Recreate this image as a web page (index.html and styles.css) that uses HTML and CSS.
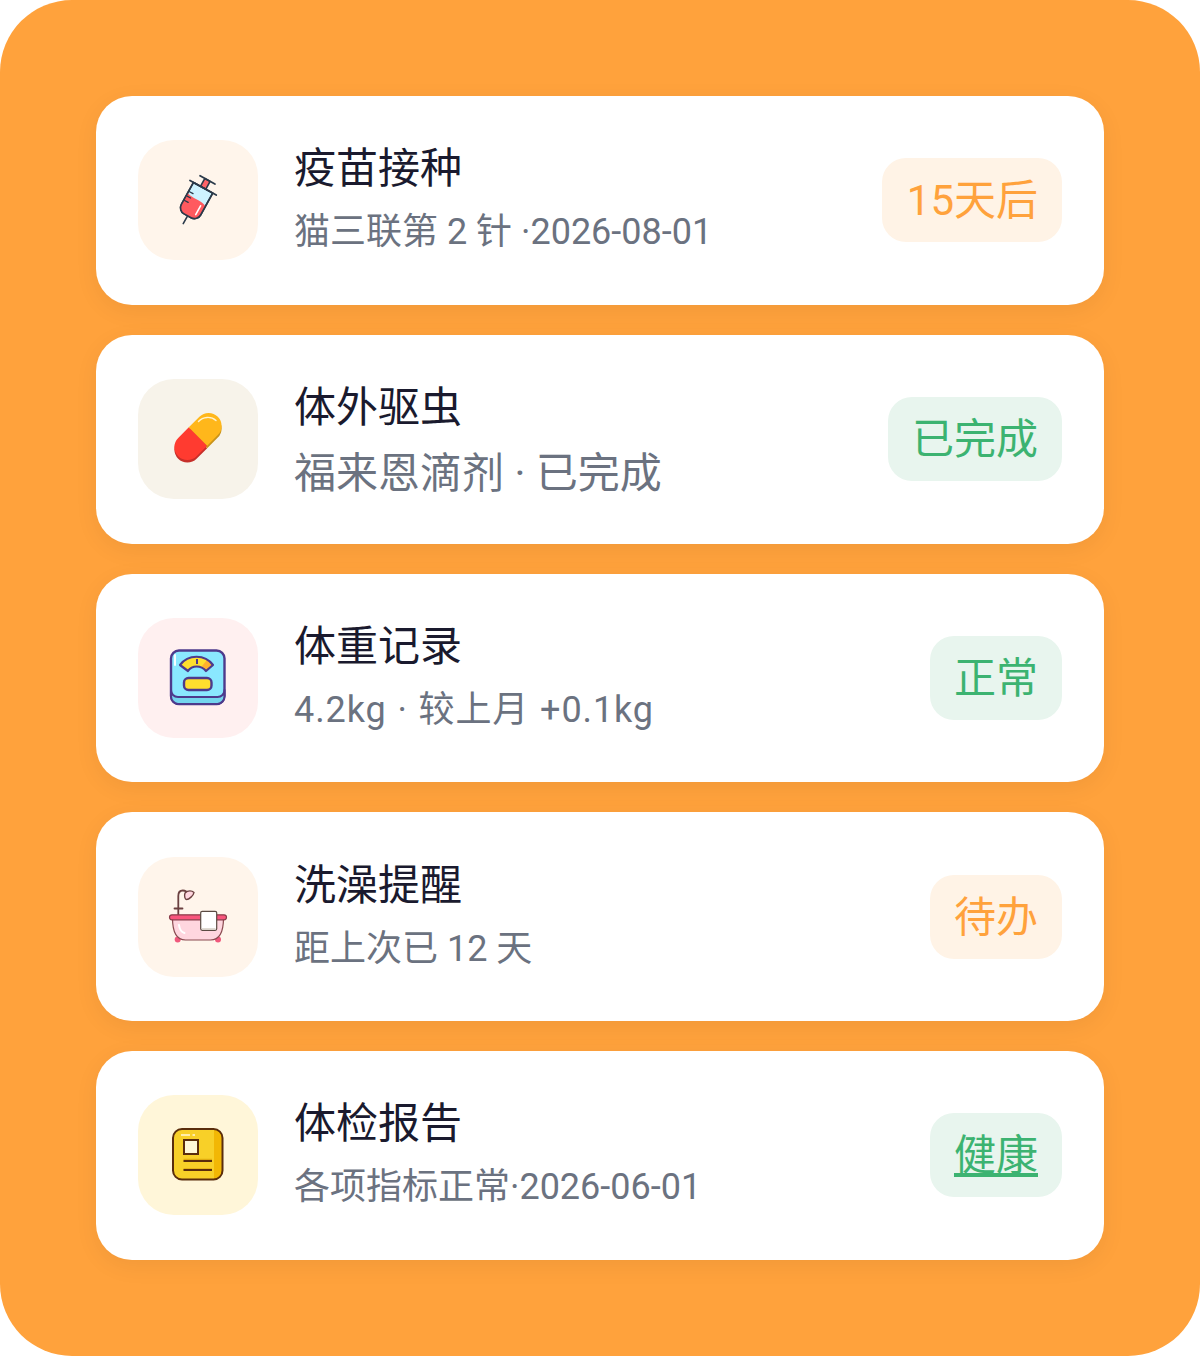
FILE: index.html
```html
<!DOCTYPE html>
<html lang="zh">

<head>
    <meta charset="UTF-8" />
    <meta name="viewport" content="width=device-width, initial-scale=1.0" />
    <title>宠物健康</title>
    <link rel="stylesheet" href="styles.css">
</head>

<body>
    <div class="frame">
        <div class="card">
            <div class="icon icon-cream">
                <svg viewBox="0 0 120 120" width="120" height="120">
                    <g transform="translate(59.3 58.300) rotate(29) translate(-60 -60)" stroke="#2b3a4a" stroke-width="1.600" stroke-linecap="round" stroke-linejoin="round">
                        <line x1="60" y1="80" x2="60" y2="89" />
                        <rect x="57" y="39" width="6" height="9" fill="#ff6468" />
                        <line x1="51.500" y1="39" x2="68.500" y2="39" stroke-width="1.800" />
                        <path d="M49 48V73a7 7 0 0 0 7 7h8a7 7 0 0 0 7-7V48z" fill="#cdf3ff" />
                        <path d="M49 60C56 63 63 59 71 63V73a7 7 0 0 1-7 7h-8a7 7 0 0 1-7-7z" fill="#ff5a5f" stroke="none" />
                        <path d="M49 48V73a7 7 0 0 0 7 7h8a7 7 0 0 0 7-7V48z" fill="none" />
                        <line x1="45" y1="48" x2="75" y2="48" stroke-width="1.800" />
                        <path d="M50 58h4M50 63h4M50 68h4" stroke-width="1.300" />
                        <line x1="66.500" y1="65" x2="66.500" y2="75" stroke="#ffffff" stroke-width="1.600" />
                    </g>
                </svg>
            </div>
            <div class="info">
                <div class="name">疫苗接种</div>
                <div class="desc">猫三联第 2 针 ·2026-08-01</div>
            </div>
            <span class="badge badge-orange badge-wide">15天后</span>
        </div>

        <div class="card">
            <div class="icon icon-beige">
                <svg viewBox="0 0 120 120" width="120" height="120">
                    <g transform="translate(60 60) rotate(-45)">
                        <path d="M0 -13H-15a13 13 0 0 0 0 26H0z" fill="#c62f2a" />
                        <path d="M0 -13H15a13 13 0 0 1 0 26H0z" fill="#c9931a" />
                    </g>
                    <g transform="translate(60 57.500) rotate(-45)">
                        <path d="M0 -13H-15a13 13 0 0 0 0 26H0z" fill="#ff3b30" />
                        <path d="M0 -13H15a13 13 0 0 1 0 26H0z" fill="#ffb71b" />
                    </g>
                    <path d="M60.500 42.500C65 37.500 73 37 78 41.500" fill="none" stroke="#fff3d0" stroke-width="1.400" stroke-linecap="round" />
                </svg>
            </div>
            <div class="info">
                <div class="name">体外驱虫</div>
                <div class="desc desc-big">福来恩滴剂 · 已完成</div>
            </div>
            <span class="badge badge-green">已完成</span>
        </div>

        <div class="card">
            <div class="icon icon-pink">
                <svg viewBox="0 0 120 120" width="120" height="120">
                    <rect x="33" y="32.500" width="53.500" height="53.500" rx="8" fill="#8ae8ff" stroke="#4d3a8c" stroke-width="2.400" />
                    <path d="M33 72c0 4 3 7 7 7h39.500c4 0 7-3 7-7v6c0 4-3 8-7 8H40c-4 0-7-4-7-8z" fill="#74d6ee" stroke="#4d3a8c" stroke-width="2" stroke-linejoin="round" />
                    <line x1="37" y1="37" x2="37" y2="47" stroke="#ffffff" stroke-width="1.800" stroke-linecap="round" />
                    <path d="M42 47C50 36 67 36 75 47L68 53C63 47 54 47 50 53z" fill="#ffdf2e" />
                    <path d="M69 42L74.500 47 68 53 64 48z" fill="#ffb02e" />
                    <path d="M42 47C50 36 67 36 75 47L68 53C63 47 54 47 50 53z" fill="none" stroke="#4d3a8c" stroke-width="2.200" stroke-linejoin="round" />
                    <line x1="59" y1="41" x2="59" y2="46" stroke="#4d3a8c" stroke-width="2" />
                    <rect x="46" y="60" width="27.500" height="12" rx="4.500" fill="#ffdf2e" stroke="#4d3a8c" stroke-width="2.400" />
                </svg>
            </div>
            <div class="info">
                <div class="name">体重记录</div>
                <div class="desc desc-spaced">4.2kg · 较上月 +0.1kg</div>
            </div>
            <span class="badge badge-green">正常</span>
        </div>

        <div class="card">
            <div class="icon icon-cream">
                <svg viewBox="0 0 120 120" width="120" height="120">
                    <path d="M40.300 58V39c0-3.500 2-5.500 4.500-5.500 1.500 0 2.500.4 3.500 1" fill="none" stroke="#6b4040" stroke-width="1.800" stroke-linecap="round" />
                    <line x1="36.500" y1="51.500" x2="44.500" y2="51.500" stroke="#6b4040" stroke-width="1.800" stroke-linecap="round" />
                    <path d="M47 36c3-3 7-2.500 9-.5-.5 3-5 7-7.500 7-1.500 0-2.500-3.500-1.500-6.500z" fill="#ffd6df" stroke="#6b4040" stroke-width="1.400" stroke-linejoin="round" />
                    <circle cx="39.700" cy="82.500" r="3" fill="#f0587c" />
                    <circle cx="80" cy="82.500" r="3" fill="#f0587c" />
                    <path d="M34.500 61c0 12 2.500 22 13 22h25c10.500 0 13-10 13-22z" fill="#ffd6df" stroke="#8a4a50" stroke-width="1.200" />
                    <rect x="31.500" y="57.800" width="57" height="5" rx="2.500" fill="#f8557c" stroke="#8a3d4a" stroke-width="1.200" />
                    <path d="M41 68c.5 4 2 7 5.500 8" fill="none" stroke="#ffffff" stroke-width="2" stroke-linecap="round" />
                    <rect x="62.700" y="54.300" width="16" height="19" rx="1.500" fill="#ffffff" stroke="#5a4a42" stroke-width="1.200" />
                    <line x1="64" y1="72" x2="77.500" y2="72" stroke="#d9d3c8" stroke-width="1.600" />
                </svg>
            </div>
            <div class="info">
                <div class="name">洗澡提醒</div>
                <div class="desc">距上次已 12 天</div>
            </div>
            <span class="badge badge-orange">待办</span>
        </div>

        <div class="card">
            <div class="icon icon-yellow">
                <svg viewBox="0 0 120 120" width="120" height="120">
                    <rect x="35" y="34" width="49.500" height="50.500" rx="9" fill="#f8d028" />
                    <path d="M76 34.500c5 0 8.500 4 8.500 9v32c0 5-3.500 9-8.500 9z" fill="#f2b705" />
                    <rect x="35" y="34" width="49.500" height="50.500" rx="9" fill="none" stroke="#5a2d0c" stroke-width="2" />
                    <path d="M43 40h9M54.500 40h2.500" stroke="#fff8d8" stroke-width="1.600" />
                    <rect x="46" y="45" width="14" height="14" fill="#fff8d8" stroke="#5a2d0c" stroke-width="2" />
                    <path d="M45.500 64.500H74M45.500 74H74" stroke="#e0ac10" stroke-width="1.600" />
                    <path d="M45.500 66H74M45.500 75H74" stroke="#5a2d0c" stroke-width="1.800" />
                </svg>
            </div>
            <div class="info">
                <div class="name">体检报告</div>
                <div class="desc">各项指标正常·2026-06-01</div>
            </div>
            <span class="badge badge-green badge-link">健康</span>
        </div>
    </div>
</body>

</html>
```

FILE: styles.css
```css
html,
body {
    margin: 0;
    background: #fff;
}

.frame {
    width: 1200px;
    height: 1356px;
    box-sizing: border-box;
    padding: 96px;
    display: flex;
    flex-direction: column;
    gap: 30px;
    background: #ffa23c;
    border-radius: 72px;
    font-family: Roboto, "Noto Sans CJK SC", sans-serif;
}

.card {
    flex: none;
    height: 208.75px;
    display: flex;
    align-items: center;
    padding: 0 42px;
    background: #fff;
    border-radius: 36px;
    box-shadow: 0 6px 24px rgba(0, 0, 0, 0.06);
}

.icon {
    flex: none;
    width: 120px;
    height: 120px;
    border-radius: 36px;
}

.icon svg {
    display: block;
}

.icon-cream {
    background: #fff5eb;
}

.icon-beige {
    background: #f7f3ea;
}

.icon-pink {
    background: #fff0f0;
}

.icon-yellow {
    background: #fff6d9;
}

.info {
    flex: 1;
    margin-left: 36px;
}

.name {
    height: 60px;
    margin-top: 1px;
    font-size: 42px;
    line-height: 60px;
    color: #1a1a2e;
}

.desc {
    height: 60px;
    margin-top: 3px;
    font-size: 36px;
    line-height: 60px;
    color: #6b7280;
}

.desc-big {
    margin-top: 6px;
    margin-bottom: -3px;
    font-size: 42px;
}

.desc-spaced {
    letter-spacing: 0.9px;
    word-spacing: 1px;
}

.badge {
    flex: none;
    padding: 13px 24px 11px;
    font-size: 42px;
    line-height: 60px;
    border-radius: 24px;
}

.badge-wide {
    padding-left: 25px;
}

.badge-orange {
    color: #ffa23c;
    background: #fff3e6;
}

.badge-green {
    color: #3cb371;
    background: #e8f5ee;
}

.badge-link {
    text-decoration: underline;
}
```
